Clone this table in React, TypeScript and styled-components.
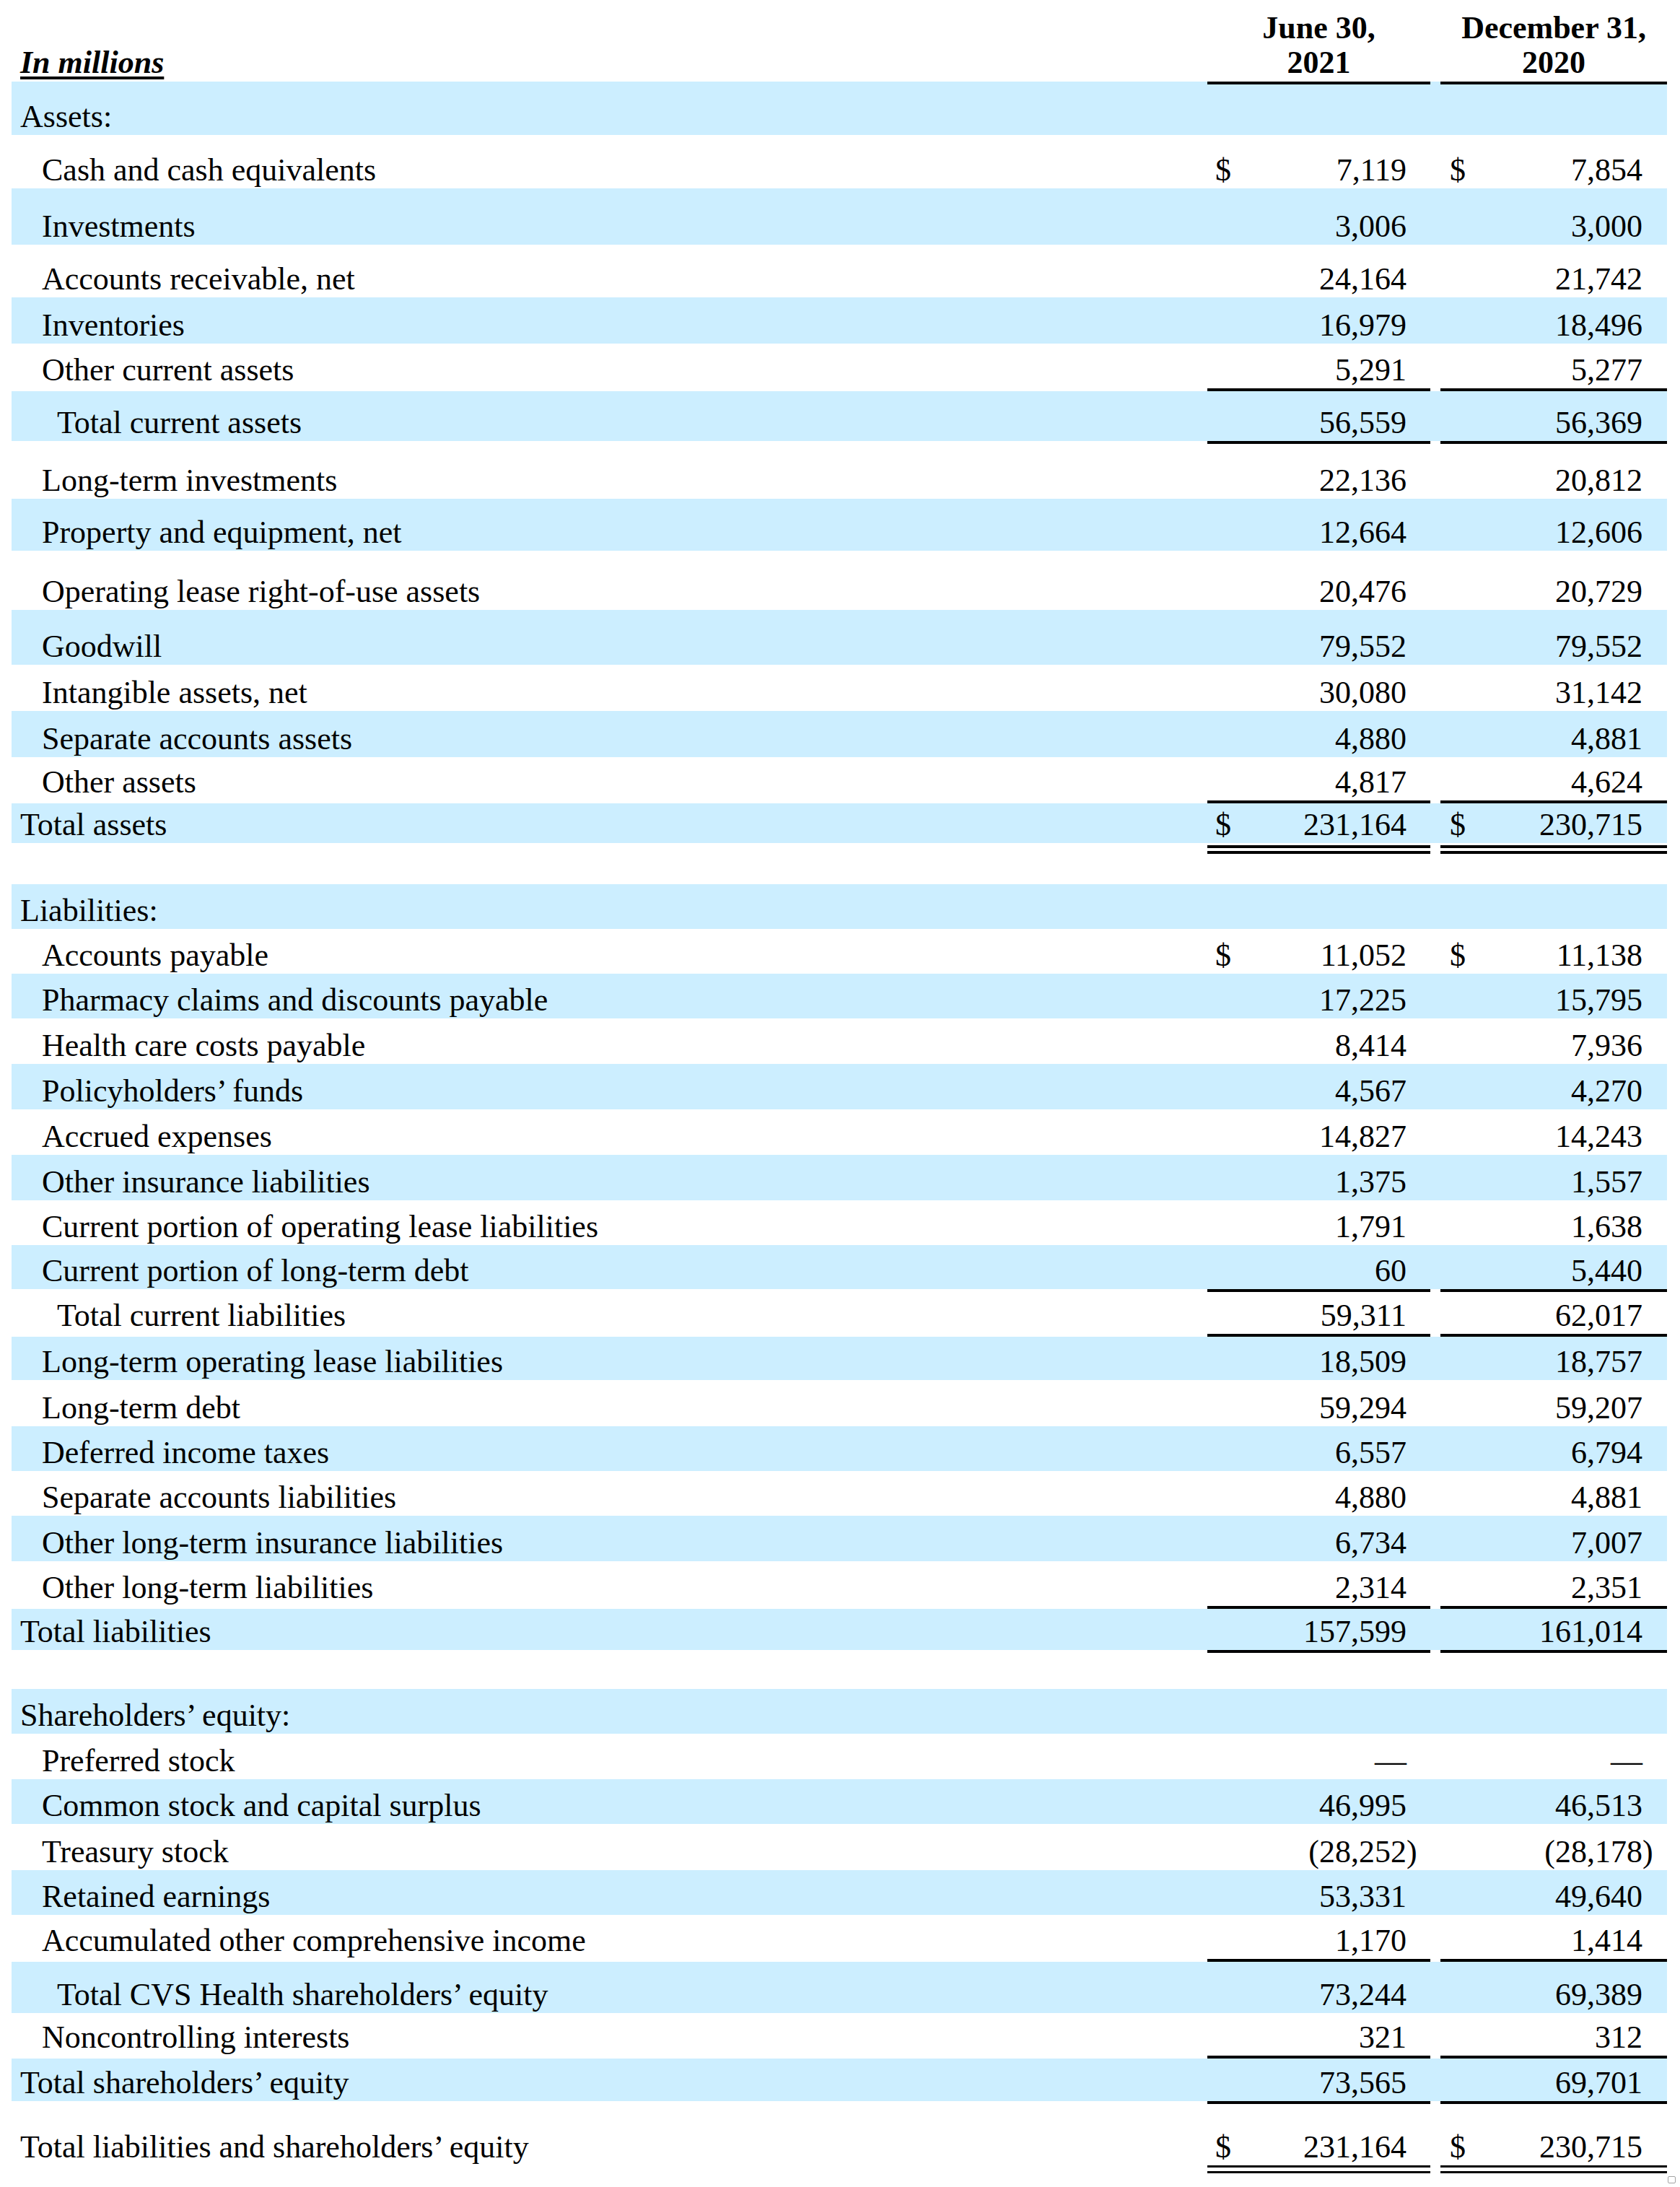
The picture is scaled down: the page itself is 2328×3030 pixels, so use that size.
import React from 'react';
import styled, { createGlobalStyle } from 'styled-components';

const BAND = '#cceeff';
const COLS = '1657px 309px 14px 314px';

const GlobalStyle = createGlobalStyle`
  html, body { margin: 0; padding: 0; background: #ffffff; }
  body {
    font-family: "Liberation Serif", "Times New Roman", Times, serif;
    color: #000000;
  }
`;

const Page = styled.div`
  width: 2328px;
  min-height: 3030px;
  box-sizing: border-box;
  padding-left: 16px;
  display: flex;
  flex-direction: column;
`;

const Sheet = styled.div`
  width: 2294px;
  display: flex;
  flex-direction: column;
`;

const Band = styled.div<{ $h: number; $band?: boolean }>`
  display: grid;
  grid-template-columns: ${COLS};
  height: ${(p) => p.$h}px;
  background: ${(p) => (p.$band ? BAND : 'transparent')};
  align-items: end;
`;

const Caption = styled.div`
  grid-column: 1;
  padding: 0 0 4px 12px;
  font-size: 44px;
  line-height: 44px;
  font-weight: 700;
  font-style: italic;
  text-decoration: underline;
  text-decoration-thickness: 4px;
  text-underline-offset: 5px;
  white-space: nowrap;
`;

const DateHead = styled.div<{ $col: number }>`
  grid-column: ${(p) => p.$col};
  text-align: center;
  font-size: 44px;
  line-height: 48px;
  font-weight: 700;
  padding-bottom: 2px;
`;

const Label = styled.div<{ $indent: number }>`
  grid-column: 1;
  padding: 0 0 3px ${(p) => [12, 42, 63][p.$indent]}px;
  font-size: 44px;
  line-height: 44px;
  white-space: nowrap;
`;

const Amount = styled.div<{ $col: number }>`
  grid-column: ${(p) => p.$col};
  display: flex;
  justify-content: space-between;
  align-items: flex-end;
  padding: ${(p) => (p.$col === 2 ? '0 33px 3px 11px' : '0 34px 3px 13px')};
  font-size: 44px;
  line-height: 44px;
  white-space: nowrap;
`;

const Dollar = styled.span``;

const Figure = styled.span`
  margin-left: auto;
`;

const Hang = styled.span`
  margin-right: -0.333em;
`;

const Segment = styled.div<{ $col: number; $double?: boolean; $line: number; $h: number }>`
  grid-column: ${(p) => p.$col};
  align-self: end;
  box-sizing: border-box;
  height: ${(p) => p.$h}px;
  ${(p) =>
    p.$double
      ? `border-top: ${p.$line}px solid #000; border-bottom: ${p.$line}px solid #000;`
      : 'background: #000;'}
`;

const Spacer = styled.div<{ $h: number }>`
  height: ${(p) => p.$h}px;
`;

const Footer = styled.div`
  display: flex;
  justify-content: flex-end;
  padding: 4px 6px 0 0;
`;

const Corner = styled.div`
  width: 11px;
  height: 10px;
  box-sizing: border-box;
  border: 1.5px solid #a3a3a3;
  border-radius: 2px;
`;

type Entry =
  | { t: 'row'; label: string; indent: number; h: number; band?: boolean; a?: string; b?: string; dollar?: boolean }
  | { t: 'rule'; band?: boolean }
  | { t: 'double'; h: number; seg: number; line: number }
  | { t: 'gap'; h: number };

const r = (
  label: string,
  indent: number,
  h: number,
  band: boolean,
  a?: string,
  b?: string,
  dollar?: boolean
): Entry => ({ t: 'row', label, indent, h, band, a, b, dollar });

const RULE: Entry = { t: 'rule' };

const DATA: Entry[] = [
  { t: 'rule', band: true },
  r('Assets:', 0, 70, true),
  r('Cash and cash equivalents', 1, 74, false, '7,119', '7,854', true),
  r('Investments', 1, 78, true, '3,006', '3,000'),
  r('Accounts receivable, net', 1, 73, false, '24,164', '21,742'),
  r('Inventories', 1, 64, true, '16,979', '18,496'),
  r('Other current assets', 1, 62, false, '5,291', '5,277'),
  RULE,
  r('Total current assets', 2, 69, true, '56,559', '56,369'),
  RULE,
  r('Long-term investments', 1, 76, false, '22,136', '20,812'),
  r('Property and equipment, net', 1, 72, true, '12,664', '12,606'),
  r('Operating lease right-of-use assets', 1, 82, false, '20,476', '20,729'),
  r('Goodwill', 1, 76, true, '79,552', '79,552'),
  r('Intangible assets, net', 1, 64, false, '30,080', '31,142'),
  r('Separate accounts assets', 1, 64, true, '4,880', '4,881'),
  r('Other assets', 1, 60, false, '4,817', '4,624'),
  RULE,
  r('Total assets', 0, 55, true, '231,164', '230,715', true),
  { t: 'double', h: 15, seg: 12, line: 4 },
  { t: 'gap', h: 42 },
  r('Liabilities:', 0, 62, true),
  r('Accounts payable', 1, 62, false, '11,052', '11,138', true),
  r('Pharmacy claims and discounts payable', 1, 62, true, '17,225', '15,795'),
  r('Health care costs payable', 1, 63, false, '8,414', '7,936'),
  r('Policyholders\u2019 funds', 1, 63, true, '4,567', '4,270'),
  r('Accrued expenses', 1, 63, false, '14,827', '14,243'),
  r('Other insurance liabilities', 1, 63, true, '1,375', '1,557'),
  r('Current portion of operating lease liabilities', 1, 62, false, '1,791', '1,638'),
  r('Current portion of long-term debt', 1, 61, true, '60', '5,440'),
  RULE,
  r('Total current liabilities', 2, 58, false, '59,311', '62,017'),
  RULE,
  r('Long-term operating lease liabilities', 1, 60, true, '18,509', '18,757'),
  r('Long-term debt', 1, 64, false, '59,294', '59,207'),
  r('Deferred income taxes', 1, 62, true, '6,557', '6,794'),
  r('Separate accounts liabilities', 1, 62, false, '4,880', '4,881'),
  r('Other long-term insurance liabilities', 1, 63, true, '6,734', '7,007'),
  r('Other long-term liabilities', 1, 62, false, '2,314', '2,351'),
  RULE,
  r('Total liabilities', 0, 57, true, '157,599', '161,014'),
  RULE,
  { t: 'gap', h: 50 },
  r('Shareholders\u2019 equity:', 0, 62, true),
  r('Preferred stock', 1, 63, false, '\u2014', '\u2014'),
  r('Common stock and capital surplus', 1, 62, true, '46,995', '46,513'),
  r('Treasury stock', 1, 64, false, '(28,252)', '(28,178)'),
  r('Retained earnings', 1, 62, true, '53,331', '49,640'),
  r('Accumulated other comprehensive income', 1, 61, false, '1,170', '1,414'),
  RULE,
  r('Total CVS Health shareholders\u2019 equity', 2, 71, true, '73,244', '69,389'),
  r('Noncontrolling interests', 1, 59, false, '321', '312'),
  RULE,
  r('Total shareholders\u2019 equity', 0, 59, true, '73,565', '69,701'),
  RULE,
  r('Total liabilities and shareholders\u2019 equity', 0, 85, false, '231,164', '230,715', true),
  { t: 'double', h: 11, seg: 11, line: 3 },
];

function Value({ v }: { v: string }) {
  if (v.endsWith(')')) {
    return (
      <Figure>
        {v.slice(0, -1)}
        <Hang>)</Hang>
      </Figure>
    );
  }
  return <Figure>{v}</Figure>;
}

function AmountCell({ col, v, dollar }: { col: number; v?: string; dollar?: boolean }) {
  return (
    <Amount $col={col}>
      {dollar ? <Dollar>$</Dollar> : null}
      {v ? <Value v={v} /> : null}
    </Amount>
  );
}

export default function App() {
  return (
    <>
      <GlobalStyle />
      <Page>
        <Sheet>
          <Band $h={113}>
            <Caption>In millions</Caption>
            <DateHead $col={2}>
              June 30,
              <br />
              2021
            </DateHead>
            <DateHead $col={4}>
              December 31,
              <br />
              2020
            </DateHead>
          </Band>
          {DATA.map((e, i) => {
            if (e.t === 'rule') {
              return (
                <Band key={i} $h={4} $band={e.band}>
                  <Segment $col={2} $line={4} $h={4} />
                  <Segment $col={4} $line={4} $h={4} />
                </Band>
              );
            }
            if (e.t === 'double') {
              return (
                <Band key={i} $h={e.h}>
                  <Segment $col={2} $double $line={e.line} $h={e.seg} />
                  <Segment $col={4} $double $line={e.line} $h={e.seg} />
                </Band>
              );
            }
            if (e.t === 'gap') {
              return <Spacer key={i} $h={e.h} />;
            }
            return (
              <Band key={i} $h={e.h} $band={e.band}>
                <Label $indent={e.indent}>{e.label}</Label>
                <AmountCell col={2} v={e.a} dollar={e.dollar} />
                <AmountCell col={4} v={e.b} dollar={e.dollar} />
              </Band>
            );
          })}
        </Sheet>
        <Footer>
          <Corner />
        </Footer>
      </Page>
    </>
  );
}
